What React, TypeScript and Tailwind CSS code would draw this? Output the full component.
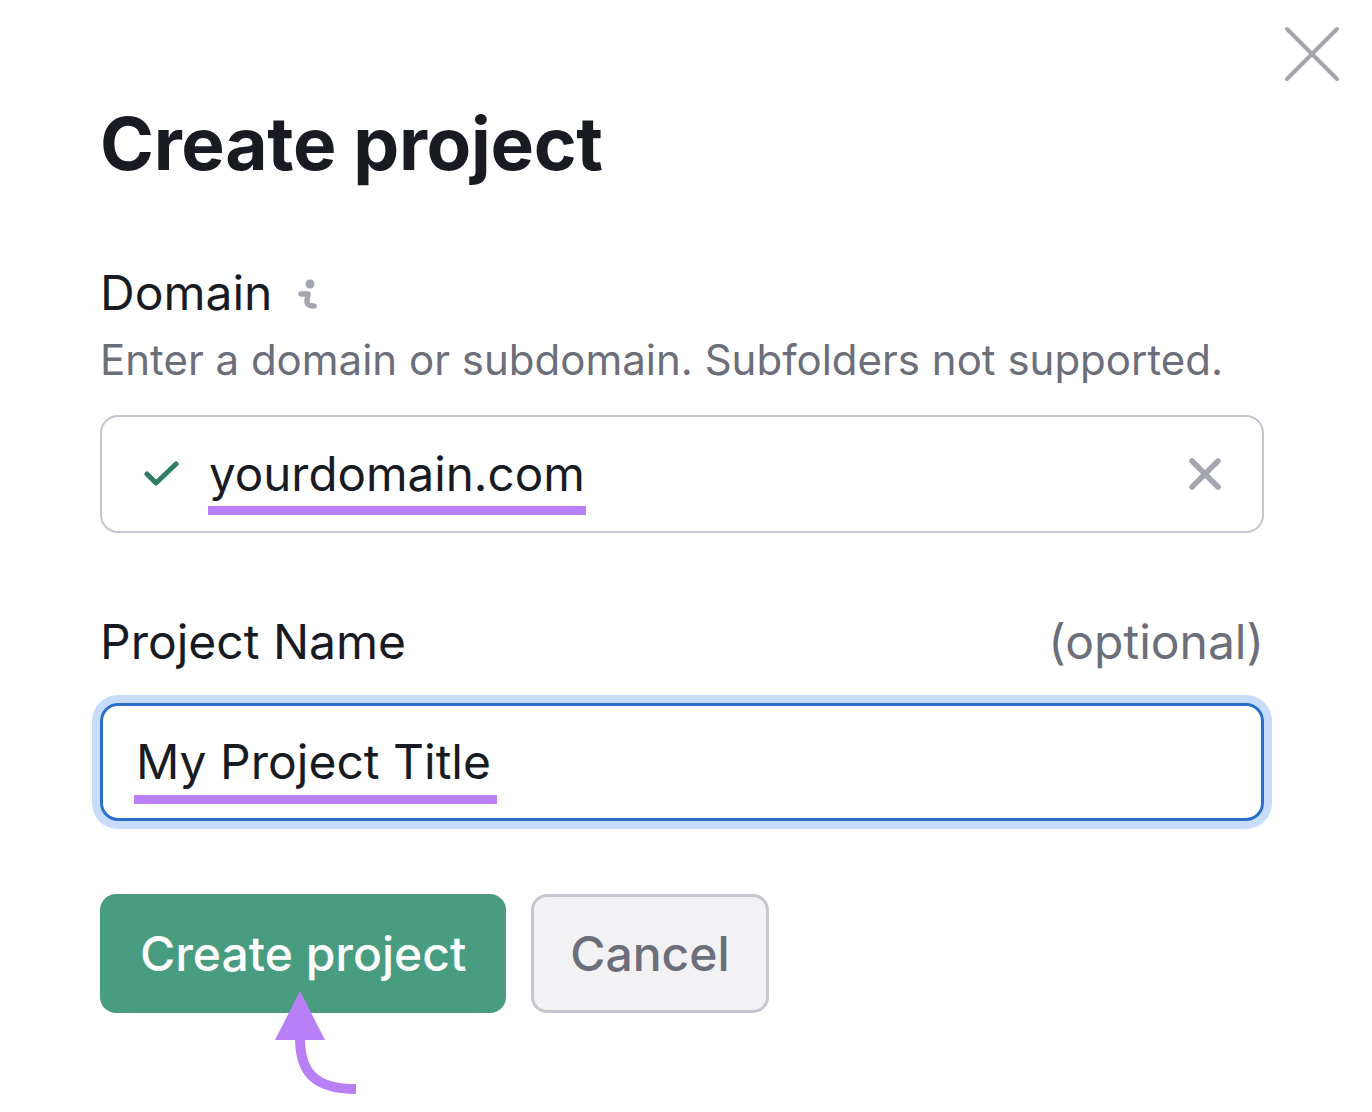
import React from 'react';

const font = { fontFamily: 'Inter, "Noto Sans", sans-serif' };

const CloseIcon = () => (
    <svg width="56" height="56" viewBox="0 0 56 56" fill="none">
        <path d="M3 3 L53 53 M53 3 L3 53" stroke="#a3a6ae" strokeWidth="4" strokeLinecap="round" />
    </svg>
);

const InfoIcon = () => (
    <svg width="22" height="36" viewBox="0 0 22 36" fill="none">
        <circle cx="13" cy="9" r="4.5" fill="#a3a6ae" />
        <path d="M4 19 H11 L10 26 Q9.5 31 17 31" stroke="#a3a6ae" strokeWidth="5.5" strokeLinecap="round" strokeLinejoin="round" />
    </svg>
);

const CheckIcon = () => (
    <svg width="36" height="28" viewBox="0 0 36 28" fill="none">
        <path d="M3 14 L12 23 L32 4" stroke="#2f7d62" strokeWidth="5" strokeLinecap="round" strokeLinejoin="round" />
    </svg>
);

const ClearIcon = () => (
    <svg width="34" height="34" viewBox="0 0 34 34" fill="none">
        <path d="M4 4 L30 30 M30 4 L4 30" stroke="#a3a6ae" strokeWidth="5.5" strokeLinecap="round" />
    </svg>
);

const App: React.FC = () => {
    return (
        <div className="relative w-[1372px] h-[1112px] bg-white overflow-hidden text-[#191b23]" style={font}>
            {/* close */}
            <button className="absolute left-[1284px] top-[26px]">
                <CloseIcon />
            </button>

            <div className="pl-[100px] pr-[108px] pt-[100px]">
                <h1 className="text-[73px] font-bold leading-[88px] tracking-[-0.3px]">Create project</h1>

                {/* Domain */}
                <div className="mt-[77px] flex items-center gap-[25px]">
                    <span className="text-[48px] leading-[56px]">Domain</span>
                    <InfoIcon />
                </div>
                <p className="mt-[14px] text-[42px] leading-[50px] text-[#6c6e79]">
                    Enter a domain or subdomain. Subfolders not supported.
                </p>

                <div className="mt-[30px] h-[118px] rounded-[18px] border-2 border-[#c4c7cf] flex items-center pl-[42px] pr-[40px]">
                    <CheckIcon />
                    <span className="relative ml-[29px] text-[47.5px] leading-[56px]">
                        yourdomain.com
                        <span className="absolute left-[-1px] right-[-1px] bottom-[-13px] h-[9px] bg-[#b87ff7]" />
                    </span>
                    <span className="ml-auto flex">
                        <ClearIcon />
                    </span>
                </div>

                {/* Project name */}
                <div className="mt-[81px] flex items-center justify-between">
                    <span className="text-[48px] leading-[56px]">Project Name</span>
                    <span className="text-[48px] leading-[56px] text-[#6c6e79]">(optional)</span>
                </div>

                <div className="mt-[33px] h-[118px] rounded-[18px] border-[3px] border-[#2b6ec9] ring-[8px] ring-[#c6dcf8] flex items-center pl-[33px]">
                    <span className="relative text-[48px] leading-[56px]">
                        My Project Title
                        <span className="absolute left-[-2px] right-[-6px] bottom-[-14px] h-[9px] bg-[#b87ff7]" />
                    </span>
                </div>

                {/* buttons */}
                <div className="mt-[73px] flex gap-[25px]">
                    <button className="h-[119px] px-[40px] rounded-[16px] bg-[#489d81] text-white text-[48px] font-medium leading-[56px]">
                        Create project
                    </button>
                    <button className="h-[119px] px-[36px] rounded-[16px] bg-[#f2f2f5] border-[3px] border-[#c4c7cf] text-[#6c6e79] text-[48px] font-medium leading-[56px]">
                        Cancel
                    </button>
                </div>
            </div>

            {/* pointer arrow */}
            <svg className="absolute left-[270px] top-[988px]" width="100" height="112" viewBox="0 0 100 112" fill="none">
                <path d="M30 3 L55 52 L5 52 Z" fill="#b87ff7" />
                <path d="M30 50 C30 84 44 101 86 101" stroke="#b87ff7" strokeWidth="10" fill="none" />
            </svg>
        </div>
    );
};

export default App;
